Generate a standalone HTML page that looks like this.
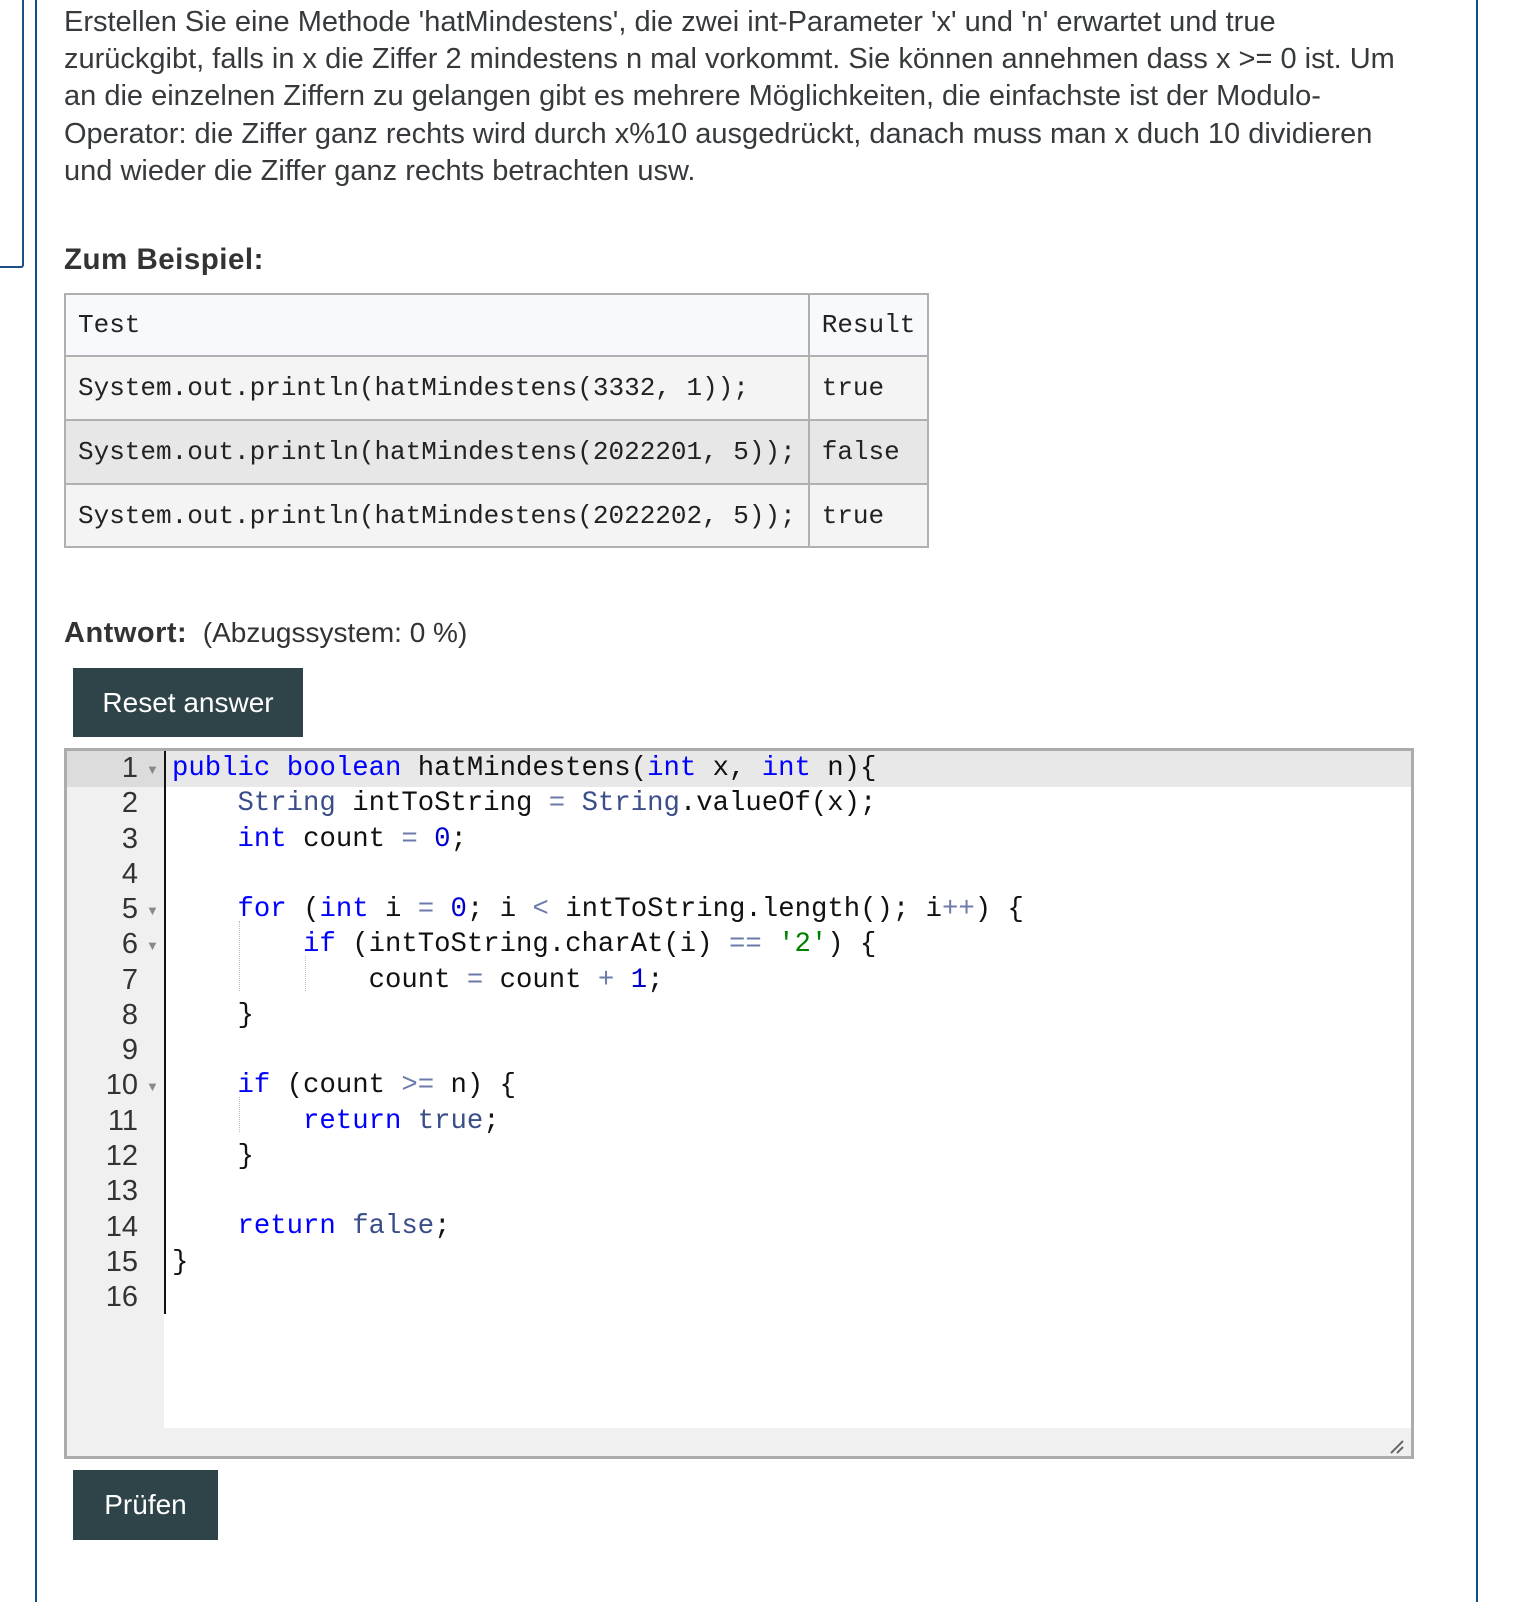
<!DOCTYPE html>
<html><head><meta charset="utf-8">
<style>
html,body{margin:0;padding:0;background:#fff;}
body{width:1518px;height:1602px;position:relative;overflow:hidden;font-family:"Liberation Sans",sans-serif;color:#333;}
.abs{position:absolute;}
.p{left:64px;top:4px;font-size:29px;line-height:37.2px;color:#373a3c;white-space:nowrap;}
.h{font-weight:bold;font-size:29.5px;color:#333;letter-spacing:0.5px;}
table{border-collapse:collapse;font-family:"Liberation Mono",monospace;font-size:26px;color:#222;}
td{border:2px solid #b0b0b0;padding:0 12px;height:60px;white-space:pre;}
.btn{background:#2e4448;color:#fff;font-size:28px;text-align:center;}
.code{font-family:"Liberation Mono",monospace;font-size:27.3px;line-height:35.27px;white-space:pre;}
.k{color:#0000ff}.t{color:#3b4e8a}.o{color:#6b7aa8}.n{color:#0000cd}.s{color:#008000}
.ln{position:absolute;left:0;width:71px;text-align:right;font-family:"Liberation Sans",sans-serif;font-size:29px;line-height:35px;color:#333;}
.fold{position:absolute;left:79px;font-size:13px;color:#888;}
</style></head><body>
<div class="abs" style="left:0;top:0;width:22px;height:266px;border-right:2px solid #1b4f85;border-bottom:2px solid #1b4f85;border-bottom-right-radius:3px;"></div>
<div class="abs" style="left:35px;top:0;width:2px;height:1602px;background:#0e4d88;"></div>
<div class="abs" style="left:1476px;top:0;width:2px;height:1602px;background:#0e4d88;"></div>

<div class="abs p">Erstellen Sie eine Methode 'hatMindestens', die zwei int-Parameter 'x' und 'n' erwartet und true<br>zurückgibt, falls in x die Ziffer 2 mindestens n mal vorkommt. Sie können annehmen dass x &gt;= 0 ist. Um<br>an die einzelnen Ziffern zu gelangen gibt es mehrere Möglichkeiten, die einfachste ist der Modulo-<br>Operator: die Ziffer ganz rechts wird durch x%10 ausgedrückt, danach muss man x duch 10 dividieren<br>und wieder die Ziffer ganz rechts betrachten usw.</div>

<div class="abs h" style="left:64px;top:243px;">Zum Beispiel:</div>

<table class="abs" style="left:64px;top:293px;width:845px;">
<tr style="background:#f8f9fd;height:62px"><td style="width:700px">Test</td><td>Result</td></tr>
<tr style="background:#f4f4f4;height:64px"><td>System.out.println(hatMindestens(3332, 1));</td><td>true</td></tr>
<tr style="background:#e7e7e7;height:64px"><td>System.out.println(hatMindestens(2022201, 5));</td><td>false</td></tr>
<tr style="background:#f4f4f4;height:63px"><td>System.out.println(hatMindestens(2022202, 5));</td><td>true</td></tr>
</table>

<div class="abs" style="left:64px;top:617px;font-size:28px;color:#333;"><b style="font-size:29px;letter-spacing:0.5px">Antwort:</b>&nbsp; (Abzugssystem: 0 %)</div>

<div class="abs btn" style="left:73px;top:668px;width:230px;height:69px;line-height:69px;">Reset answer</div>

<div class="abs" style="left:64px;top:748px;width:1344px;height:705px;border:3px solid #acacac;background:#fff;overflow:hidden;">
  <div class="abs" style="left:0;top:0;width:97px;height:705px;background:#f0f0f0;"></div>
  <div class="abs" style="left:0;top:0;width:1344px;height:36px;background:#e8e8e8;"></div>
  <div class="abs" style="left:0;top:0;width:97px;height:36px;background:#dcdcdc;"></div>
  <div class="abs" style="left:97px;top:0;width:2px;height:563px;background:#111;"></div>
  <div class="abs" style="left:97px;top:677px;width:1247px;height:28px;background:#f0f0f0;"></div>
  <svg class="abs" style="left:1322px;top:688px" width="16" height="16"><path d="M2 14L14 2M8 14L14 8" stroke="#666" stroke-width="2"/></svg>
  <div class="abs" style="left:172px;top:170px;width:0;height:70px;border-left:1px dotted #bbb;"></div>
  <div class="abs" style="left:238px;top:205px;width:0;height:35px;border-left:1px dotted #bbb;"></div>
  <div class="abs" style="left:172px;top:346px;width:0;height:35px;border-left:1px dotted #bbb;"></div>
  <div style="position:absolute;left:0;top:0;">
    <div class="ln" style="top:0">1</div><div class="fold" style="top:11px">▼</div>
    <div class="ln" style="top:35.27px">2</div>
    <div class="ln" style="top:70.54px">3</div>
    <div class="ln" style="top:105.81px">4</div>
    <div class="ln" style="top:141.08px">5</div><div class="fold" style="top:152px">▼</div>
    <div class="ln" style="top:176.35px">6</div><div class="fold" style="top:187px">▼</div>
    <div class="ln" style="top:211.62px">7</div>
    <div class="ln" style="top:246.89px">8</div>
    <div class="ln" style="top:282.16px">9</div>
    <div class="ln" style="top:317.43px">10</div><div class="fold" style="top:328px">▼</div>
    <div class="ln" style="top:352.7px">11</div>
    <div class="ln" style="top:387.97px">12</div>
    <div class="ln" style="top:423.24px">13</div>
    <div class="ln" style="top:458.51px">14</div>
    <div class="ln" style="top:493.78px">15</div>
    <div class="ln" style="top:529.05px">16</div>
  </div>
  <div class="abs code" style="left:105px;top:0;color:#111;"><span class="k">public</span> <span class="k">boolean</span> hatMindestens(<span class="k">int</span> x, <span class="k">int</span> n){
    <span class="t">String</span> intToString <span class="o">=</span> <span class="t">String</span>.valueOf(x);
    <span class="k">int</span> count <span class="o">=</span> <span class="n">0</span>;

    <span class="k">for</span> (<span class="k">int</span> i <span class="o">=</span> <span class="n">0</span>; i <span class="o">&lt;</span> intToString.length(); i<span class="o">++</span>) {
        <span class="k">if</span> (intToString.charAt(i) <span class="o">==</span> <span class="s">'2'</span>) {
            count <span class="o">=</span> count <span class="o">+</span> <span class="n">1</span>;
    }

    <span class="k">if</span> (count <span class="o">&gt;=</span> n) {
        <span class="k">return</span> <span class="t">true</span>;
    }

    <span class="k">return</span> <span class="t">false</span>;
}
</div>
</div>

<div class="abs btn" style="left:73px;top:1470px;width:145px;height:70px;line-height:70px;">Prüfen</div>
</body></html>
